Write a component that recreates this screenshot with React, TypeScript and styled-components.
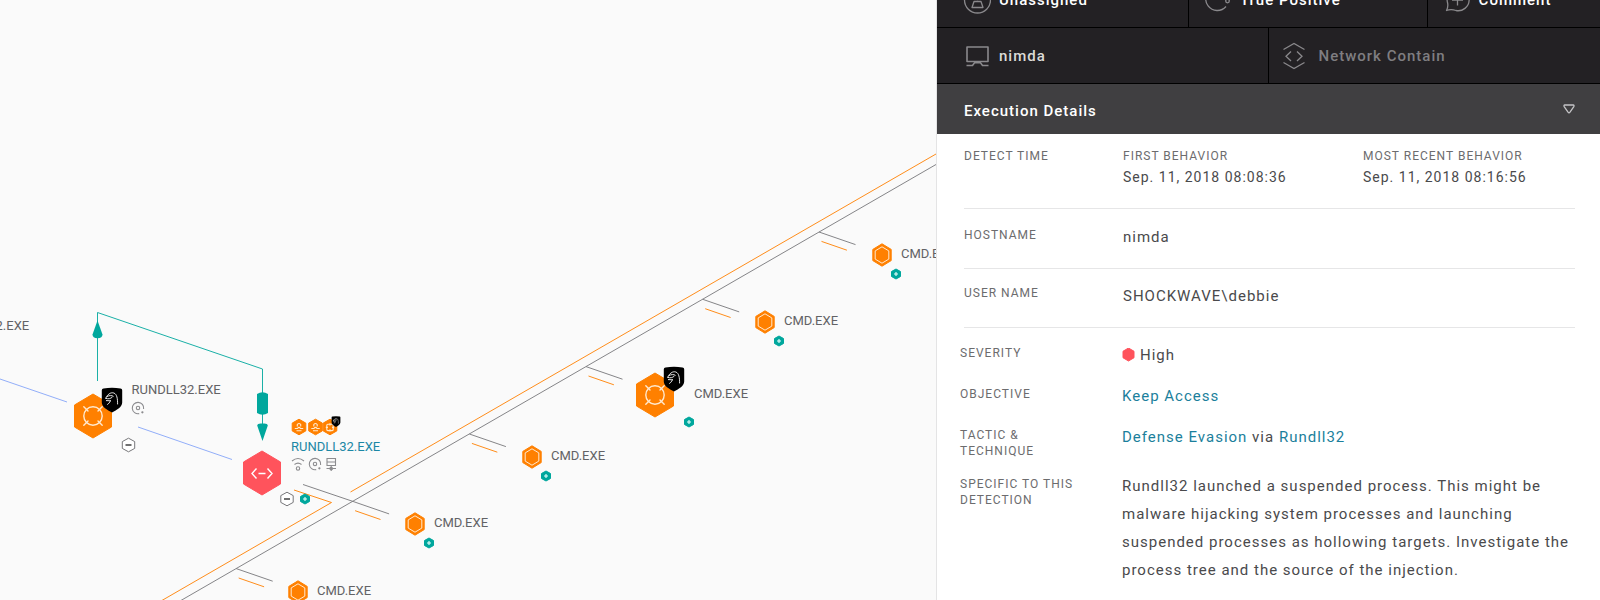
import React from "react";
import styled, { createGlobalStyle } from "styled-components";

const GlobalStyle = createGlobalStyle`
  * { box-sizing: border-box; }
  body { margin: 0; font-family: Roboto, "Liberation Sans", sans-serif; background: #fafafa; }
  button { font: inherit; letter-spacing: inherit; color: inherit; }
`;

const orange = "#ff8000";
const red = "#ff535c";
const teal = "#00a79d";

/* ---------- layout ---------- */

const Screen = styled.div`
  display: grid;
  grid-template-columns: minmax(0, 1fr) 664px;
  min-height: 100vh;
  overflow: hidden;
`;

const Canvas = styled.main`
  position: relative;
  overflow: hidden;
  background: #fafafa;
`;

const Panel = styled.aside`
  overflow: hidden;
  background: #fff;
  border-left: 1px solid #e4e4e5;
`;

/* ---------- process tree ---------- */

const Edges = styled.svg`
  position: absolute;
  top: 0;
  left: 0;
  overflow: visible;
`;

const Pin = styled.div<{ $x: number; $y: number }>`
  position: absolute;
  left: ${(p) => p.$x}px;
  top: ${(p) => p.$y}px;
`;

const Drawing = styled.svg`
  position: absolute;
  top: 0;
  left: 0;
  overflow: visible;
`;

const ProcessName = styled.span<{ $x: number; $y: number; $selected?: boolean }>`
  position: absolute;
  left: ${(p) => p.$x}px;
  top: ${(p) => p.$y}px;
  font-size: 13px;
  line-height: 16px;
  white-space: nowrap;
  color: ${(p) => (p.$selected ? "#1b87a5" : "#626265")};
`;

const hex = (w: number, h: number, cx = 0, cy = 0) => {
  const a = w / 2;
  const b = h / 2;
  return [[0, -b], [a, -b / 2], [a, b / 2], [0, b], [-a, b / 2], [-a, -b / 2]]
    .map(([x, y]) => `${cx + x},${cy + y}`)
    .join(" ");
};

const Expand = ({ x, y }: { x: number; y: number }) => (
  <g transform={`translate(${x} ${y})`}>
    <polygon points={hex(9, 10)} fill={teal} stroke={teal} strokeLinejoin="round" />
    <path d="M-2 0H2M0-2V2" stroke="#e8fffd" strokeWidth="1.1" />
  </g>
);

const Collapse = ({ x, y }: { x: number; y: number }) => (
  <g transform={`translate(${x} ${y})`}>
    <polygon points={hex(12.4, 13.6)} fill="#fff" stroke="#77777a" strokeLinejoin="round" />
    <path d="M-3 0H3" stroke="#222" strokeWidth="1.3" />
  </g>
);

const Shield = ({ x, y, s = 1 }: { x: number; y: number; s?: number }) => (
  <g transform={`translate(${x} ${y}) scale(${s})`}>
    <path
      d="M-8.5-11.6Q0-13 8.5-11.6Q10.2-11.4 10.2-9.8V2.5C10.2 7 5 9.8 0 12.6C-5 9.8-10.2 7-10.2 2.5V-9.8Q-10.2-11.4-8.5-11.6Z"
      fill="#000"
    />
    <g fill="none" stroke="#fff" strokeWidth="0.9" strokeLinecap="round" strokeLinejoin="round">
      <path d="M-6.2-1.8C-4.6-5.6-1.4-8 1.8-7C5-5.8 5.6-1.5 5.6 4" />
      <path d="M-4.6-3.6C-2.8-4.6-.4-4.8 1.2-3.8M-6.2-1.6C-3.4-.6-1.6-1.4 0-2.6" />
      <path d="M-4.4 4.4C-3.2 3.6-2.2 2.4-1.6.8M-5.6.6L-1.6.8" />
    </g>
  </g>
);

const Reticle = () => (
  <g fill="none" stroke="#ffe9cf" strokeWidth="1.4" strokeLinecap="round">
    <circle r="9.2" />
    <path d="M-9.2-9.2L-5-5M9.2-9.2L5-5M-9.2 9.2L-5 5M9.2 9.2L5 5" />
  </g>
);

const DiscMark = ({ x, y }: { x: number; y: number }) => (
  <g transform={`translate(${x} ${y})`} fill="none" stroke="#8c8c8f" strokeWidth="1.1">
    <path d="M5.6 1A5.7 5.7 0 1 0 1.2 5.6" />
    <circle r="1.7" />
    <circle cx="4.4" cy="4.3" r="0.6" fill="#8c8c8f" />
  </g>
);

const SmallProcess = ({ x, y }: { x: number; y: number }) => (
  <Pin $x={x} $y={y}>
    <Drawing width="1" height="1" aria-hidden="true">
      <polygon points={hex(18.4, 22.4)} fill={orange} stroke={orange} strokeLinejoin="round" />
      <polygon points={hex(13.6, 16.4)} fill="none" stroke="#ffe9cf" />
      <Expand x={14} y={19} />
    </Drawing>
    <ProcessName $x={19} $y={-9}>CMD.EXE</ProcessName>
  </Pin>
);

const smallProcesses = [
  [882, 255],
  [765, 322],
  [532, 457],
  [415, 524],
  [298, 592],
];

const branches = [
  [819, 232],
  [702.7, 299.3],
  [586, 366.6],
  [469.4, 434],
  [352.6, 501.3],
  [236.2, 568.6],
];

const ProcessTree = () => (
  <Canvas aria-label="Process tree">
    <Edges width="1" height="1" aria-hidden="true">
      <g fill="none" strokeWidth="0.9">
        <path d="M0 379L67 402M138 427L232 459.5" stroke="#86a5f8" />
        <path d="M97.5 381V312.5L262.5 369V430" stroke={teal} />
        <path d="M936 164.5L180 601M303 484.5L352.6 501.3" stroke="#77777a" />
        <path d="M936 154L350.5 492M294 490L331.5 502.5L161 601" stroke={orange} />
        {branches.map(([x, y]) => (
          <g key={x}>
            <path d={`M${x} ${y}l36.5 12.6`} stroke="#77777a" />
            <path d={`M${x + 2.5} ${y + 9.4}l25.4 8.8`} stroke={orange} />
          </g>
        ))}
      </g>
      <g fill={teal}>
        <path d="M97.5 320.5L102.5 334.5Q102.5 338 97.5 338.2Q92.5 338 92.5 334.5Z" />
        <path d="M257 394Q262.5 390.5 268 394V413Q262.5 416.5 257 413Z" />
        <path d="M262.5 441L257.2 425.5Q257.5 423 262.5 423.6Q267.500 423 267.8 425.5Z" />
      </g>
    </Edges>

    <ProcessName $x={-60} $y={318}>RUNDLL32.EXE</ProcessName>

    <Pin $x={92.5} $y={415.5}>
      <Drawing width="1" height="1" aria-hidden="true">
        <polygon points={hex(37, 44)} fill={orange} stroke={orange} strokeLinejoin="round" />
        <Reticle />
        <Shield x={19} y={-16} />
        <DiscMark x={45} y={-8} />
        <Collapse x={35.5} y={29} />
      </Drawing>
      <ProcessName $x={39} $y={-34}>RUNDLL32.EXE</ProcessName>
    </Pin>

    <Pin $x={262} $y={473}>
      <Drawing width="1" height="1" aria-hidden="true">
        <polygon points={hex(37, 44)} fill={red} stroke={red} strokeLinejoin="round" />
        <path
          d="M-5.5-4.5L-10 .5L-5.5 5.5M5.5-4.5L10 .5L5.5 5.5M-3.5 .5H3.5"
          fill="none"
          stroke="#fff"
          strokeWidth="1.4"
        />
        <Collapse x={25} y={26} />
        <Expand x={43} y={26} />
        <g fill={orange} stroke={orange} strokeLinejoin="round">
          <polygon points={hex(13.6, 15.6, 37, -46)} />
          <polygon points={hex(13.6, 15.6, 53.5, -46)} />
          <polygon points={hex(13.6, 15.6, 68, -46)} />
        </g>
        <g fill="none" stroke="#ffe9cf" strokeWidth="1.1">
          <path d="M35.3-46.5V-48.5Q37-50.5 38.7-48.5V-46.5M32.8-44.5H35.5Q37-46.8 38.5-44.5H41.2M34.5-42.2H39.5" />
          <path d="M51.8-46.5V-48.5Q53.5-50.5 55.2-48.5V-46.5M49.3-44.5H52Q53.5-46.8 55-44.5H57.7M51-42.2H56" />
          <rect x="64.8" y="-48.8" width="6.4" height="6.4" rx="1" />
          <path d="M68-49.8V-47.5M68-43.7V-41.4M63.8-45.6H66M70-45.6H72.2" />
        </g>
        <Shield x={74} y={-51.5} s={0.43} />
        <g fill="none" stroke="#8c8c8f" strokeWidth="1.1">
          <path d="M30-12Q36-17 42-12M32.5-8.5Q36-11.3 39.5-8.5" />
          <circle cx="36" cy="-4.5" r="1.7" />
          <path d="M65-14.5H73.5V-7.5H65ZM65-11H73.5M69.2-7.500V-2M64.5-4.5H74" />
          <circle cx="69.2" cy="-4.5" r="1.3" fill="#8c8c8f" />
        </g>
        <DiscMark x={53} y={-9} />
      </Drawing>
      <ProcessName $x={29} $y={-34} $selected>RUNDLL32.EXE</ProcessName>
    </Pin>

    <Pin $x={655} $y={395}>
      <Drawing width="1" height="1" aria-hidden="true">
        <polygon points={hex(37, 44)} fill={orange} stroke={orange} strokeLinejoin="round" />
        <Reticle />
        <Shield x={19} y={-16} />
        <Expand x={34} y={27} />
      </Drawing>
      <ProcessName $x={39} $y={-9}>CMD.EXE</ProcessName>
    </Pin>

    {smallProcesses.map(([x, y]) => (
      <SmallProcess key={x} x={x} y={y} />
    ))}
  </Canvas>
);

/* ---------- details panel ---------- */

const ActionRow = styled.div<{ $columns: string; $scrolled?: boolean }>`
  display: grid;
  grid-template-columns: ${(p) => p.$columns};
  margin-top: ${(p) => (p.$scrolled ? "-28px" : "0")};
  background: #232124;
  border-bottom: 1px solid #000;
`;

const Action = styled.button<{ $tone?: string; $inset?: number; $gap?: number }>`
  display: flex;
  align-items: center;
  gap: ${(p) => p.$gap ?? 8}px;
  height: 55px;
  padding: 0 0 0 ${(p) => p.$inset ?? 26}px;
  background: none;
  border: 0;
  border-right: 1px solid #000;
  font-size: 15px;
  font-weight: 500;
  letter-spacing: 1px;
  white-space: nowrap;
  color: ${(p) => p.$tone ?? "#fff"};

  &:last-child { border-right: 0; }
`;

const ActionIcon = styled.svg`
  flex: none;
  width: 28px;
  height: 28px;
  fill: none;
  stroke: #8a898c;
  stroke-width: 1.3;
`;

const SectionHeader = styled.button`
  display: flex;
  align-items: center;
  justify-content: space-between;
  width: 100%;
  height: 50px;
  padding: 4px 25px 0 27px;
  background: #403f41;
  border: 0;
  font-size: 15px;
  font-weight: 500;
  letter-spacing: 1px;
  color: #fff;
`;

const Chevron = styled.svg`
  width: 12px;
  height: 14px;
`;

const Facts = styled.dl`
  margin: 0;
  padding: 0 25px 0 27px;
`;

const Fact = styled.div<{ $top?: number; $bottom?: number }>`
  display: grid;
  grid-template-columns: 159px minmax(0, 1fr);
  padding: ${(p) => p.$top ?? 17}px 0 ${(p) => p.$bottom ?? 20}px;
  border-bottom: 1px solid #e6e6e7;
`;

const Label = styled.dt<{ $drop?: number }>`
  padding-top: ${(p) => p.$drop ?? 0}px;
  font-size: 12px;
  line-height: 16px;
  letter-spacing: 1px;
  text-transform: uppercase;
  color: #6c6c6e;
`;

const Value = styled.dd`
  margin: 0;
  font-size: 15px;
  line-height: 22px;
  letter-spacing: 1px;
  color: #4a4a4c;
`;

const Times = styled.dd`
  display: grid;
  grid-template-columns: 240px minmax(0, 1fr);
  margin: 0;
`;

const TimeLabel = styled.div`
  font-size: 12px;
  line-height: 16px;
  letter-spacing: 1px;
  text-transform: uppercase;
  color: #6c6c6e;
`;

const Time = styled.time`
  display: block;
  padding-top: 2px;
  font-size: 14px;
  line-height: 22px;
  letter-spacing: 1px;
  color: #4a4a4c;
`;

const Detection = styled.dl`
  margin: 0;
  padding: 16px 25px 0 23px;
`;

const DetectionRow = styled.div<{ $below?: number }>`
  display: grid;
  grid-template-columns: 162px minmax(0, 1fr);
  padding-bottom: ${(p) => p.$below ?? 19}px;
`;

const Narrow = styled.span`
  display: block;
  max-width: 120px;
`;

const Severity = styled.span`
  display: flex;
  align-items: center;
  gap: 5px;
`;

const Description = styled(Value)`
  line-height: 28px;
`;

const Link = styled.a`
  color: #1b7f9c;
  text-decoration: none;
`;

export default function App() {
  return (
    <>
      <GlobalStyle />
      <Screen>
        <ProcessTree />
        <Panel>
          <ActionRow $columns="38fr 36fr 26fr" $scrolled>
            <Action>
              <ActionIcon viewBox="0 0 28 28">
                <circle cx="14.5" cy="14" r="13" />
                <path d="M9 21.500L11 15.5H18L20 21.5Z" strokeLinejoin="round" />
                <circle cx="14.5" cy="10" r="3.5" />
              </ActionIcon>
              Unassigned
            </Action>
            <Action $inset={15}>
              <ActionIcon viewBox="0 0 28 28">
                <path d="M22 20.5A11.5 11.5 0 1 1 24.5 10.5" />
                <circle cx="23.5" cy="15" r="1.8" />
              </ActionIcon>
              True Positive
            </Action>
            <Action $inset={15}>
              <ActionIcon viewBox="0 0 28 28">
                <path
                  d="M4.5 16.5A11 11 0 1 1 13 24.5Q8 22.8 3.5 24.5Q5.5 20.5 4.5 16.5Z"
                  strokeLinejoin="round"
                />
                <path d="M14.5 8.5V19.5M9 14H20" />
              </ActionIcon>
              Comment
            </Action>
          </ActionRow>

          <ActionRow $columns="1fr 1fr">
            <Action $tone="#dcdbd8">
              <ActionIcon viewBox="0 0 28 28">
                <path d="M4 5H25V19.5H4Z" strokeWidth="1.6" strokeLinejoin="round" />
                <path d="M3.5 23.5H9.5L11.5 20.8H17.500L19.5 23.5H25.5" strokeWidth="1.6" />
              </ActionIcon>
              nimda
            </Action>
            <Action $tone="#7f7e81" $inset={11} $gap={11}>
              <ActionIcon viewBox="0 0 28 28">
                <path d="M3.5 7.5L14 1.5L24.5 7.5M3.5 20.5L14 26.5L24.5 20.5" />
                <path d="M11 9.5L6 14.3L11 19M17 9.5L22 14.3L17 19" />
              </ActionIcon>
              Network Contain
            </Action>
          </ActionRow>

          <SectionHeader aria-expanded="true">
            Execution Details
            <Chevron viewBox="0 0 12 14" aria-hidden="true">
              <path
                d="M1.8 1H10.2Q11.5 1.2 10.8 2.6L7 8.2Q6 9.4 5 8.2L1.200 2.6Q.5 1.2 1.8 1Z"
                fill="none"
                stroke="#c4c4c6"
                strokeWidth="1.3"
              />
            </Chevron>
          </SectionHeader>

          <Facts>
            <Fact $top={14} $bottom={20}>
              <Label>Detect time</Label>
              <Times>
                <div>
                  <TimeLabel>First behavior</TimeLabel>
                  <Time>Sep. 11, 2018 08:08:36</Time>
                </div>
                <div>
                  <TimeLabel>Most recent behavior</TimeLabel>
                  <Time>Sep. 11, 2018 08:16:56</Time>
                </div>
              </Times>
            </Fact>
            <Fact>
              <Label $drop={1}>Hostname</Label>
              <Value>nimda</Value>
            </Fact>
            <Fact $top={16}>
              <Label>User name</Label>
              <Value>SHOCKWAVE\debbie</Value>
            </Fact>
          </Facts>

          <Detection>
            <DetectionRow>
              <Label $drop={1}>Severity</Label>
              <Value>
                <Severity>
                  <svg width="13" height="14" viewBox="0 0 13 14" aria-hidden="true">
                    <polygon points={hex(11, 13, 6.5, 6.5)} fill={red} stroke={red} strokeLinejoin="round" />
                  </svg>
                  High
                </Severity>
              </Value>
            </DetectionRow>
            <DetectionRow>
              <Label $drop={1}>Objective</Label>
              <Value>
                <Link href="#keep-access">Keep Access</Link>
              </Value>
            </DetectionRow>
            <DetectionRow $below={13}>
              <Label $drop={1}>
                <Narrow>Tactic &amp; technique</Narrow>
              </Label>
              <Value>
                <Link href="#defense-evasion">Defense Evasion</Link> via <Link href="#rundll32">Rundll32</Link>
              </Value>
            </DetectionRow>
            <DetectionRow $below={16}>
              <Label $drop={4}>
                <Narrow>Specific to this detection</Narrow>
              </Label>
              <Description>
                Rundll32 launched a suspended process. This might be malware hijacking system processes and launching
                suspended processes as hollowing targets. Investigate the process tree and the source of the injection.
              </Description>
            </DetectionRow>
          </Detection>
        </Panel>
      </Screen>
    </>
  );
}
